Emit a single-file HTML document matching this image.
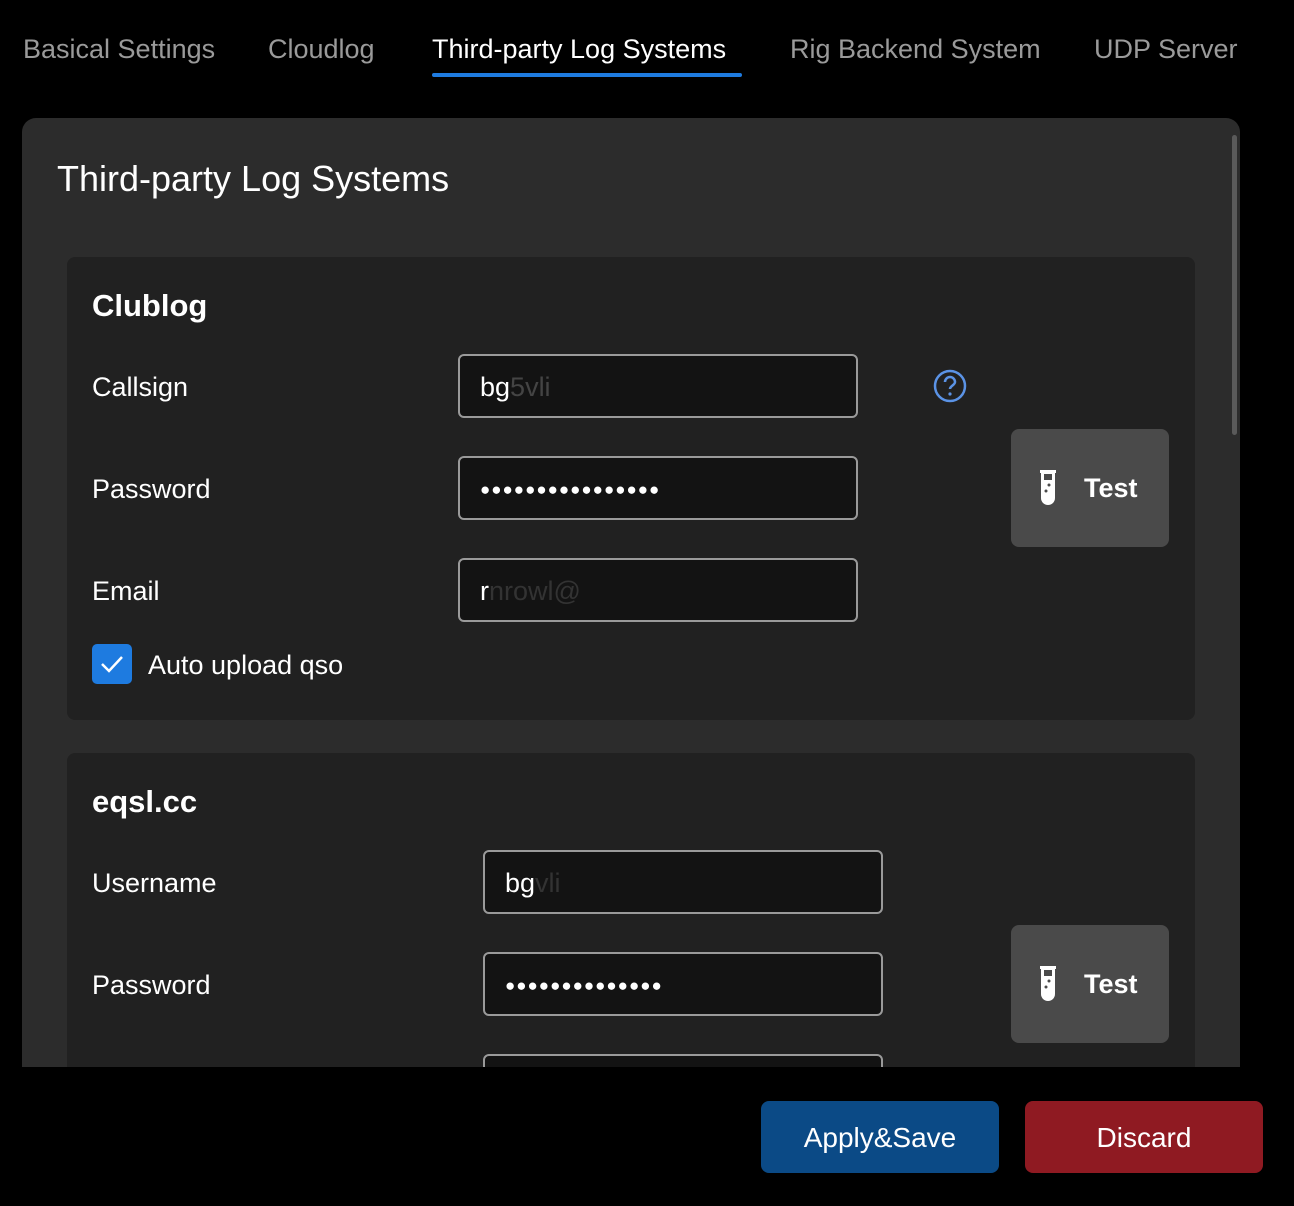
<!DOCTYPE html>
<html><head><style>
*{box-sizing:border-box;margin:0;padding:0}
body{width:1294px;height:1206px;background:#000;font-family:"Liberation Sans",sans-serif;color:#fff;position:relative;overflow:hidden}
.tab{position:absolute;top:34px;font-size:27px;color:#9a9a9a;white-space:nowrap}
.tab.act{color:#fff}
.ul{position:absolute;left:432px;top:73px;width:310px;height:4px;background:#1e7be0;border-radius:2px}
.panel{position:absolute;left:22px;top:118px;width:1218px;height:949px;background:#2c2c2c;border-radius:14px 14px 0 0;overflow:hidden}
.sb{position:absolute;left:1232px;top:135px;width:5px;height:300px;background:#5a5a5a;border-radius:3px}
h1{position:absolute;left:35px;top:40px;font-size:36px;font-weight:normal}
.sec{position:absolute;left:45px;width:1128px;background:#212121;border-radius:8px}
.sec h2{position:absolute;left:25px;font-size:31px;font-weight:bold}
.lbl{position:absolute;left:25px;font-size:27px}
.inp{position:absolute;width:400px;height:64px;background:#131313;border:2px solid #9a9a9a;border-radius:6px;font-size:27px;padding:16px 20px;color:#fff}
.dots{font-size:17px;letter-spacing:1px;padding-top:22px}
.test{position:absolute;left:944px;width:158px;height:118px;background:#4a4a4a;border-radius:8px}
.test span{position:absolute;left:73px;top:44px;font-size:27px;font-weight:bold}
.test svg{position:absolute;left:28px;top:40px}
.btn{position:absolute;top:1101px;width:238px;height:72px;border-radius:8px;font-size:28px;text-align:center;line-height:74px}
</style></head><body>
<div class="tab" style="left:23px">Basical Settings</div>
<div class="tab" style="left:268px">Cloudlog</div>
<div class="tab act" style="left:432px">Third-party Log Systems</div>
<div class="tab" style="left:790px">Rig Backend System</div>
<div class="tab" style="left:1094px">UDP Server</div>
<div class="ul"></div>
<div class="panel">
<h1>Third-party Log Systems</h1>
<div class="sec" style="top:139px;height:463px">
<h2 style="top:31px">Clublog</h2>
<div class="lbl" style="top:115px">Callsign</div>
<div class="inp" style="left:391px;top:97px">bg<span style="color:#444">5vli</span></div>
<svg style="position:absolute;left:866px;top:112px" width="34" height="34" viewBox="0 0 34 34"><circle cx="17" cy="17" r="15" fill="none" stroke="#5b93e6" stroke-width="2.5"/><path d="M12 13a5 5 0 0 1 10 0c0 3-5 4-5 7" fill="none" stroke="#5b93e6" stroke-width="2.5"/><circle cx="17" cy="25" r="1.6" fill="#5b93e6"/></svg>
<div class="lbl" style="top:217px">Password</div>
<div class="inp dots" style="left:391px;top:199px">●●●●●●●●●●●●●●●●</div>
<div class="test" style="top:172px"><svg width="18" height="36" viewBox="0 0 18 36"><rect x="1" y="1" width="16" height="3" fill="#fff"/><path d="M2 4h14v25a7 7 0 0 1-14 0z" fill="#fff"/><rect x="5" y="5" width="8" height="6" fill="#4a4a4a"/><circle cx="10" cy="16" r="1.5" fill="#4a4a4a"/><circle cx="7" cy="22" r="1.5" fill="#4a4a4a"/></svg><span>Test</span></div>
<div class="lbl" style="top:319px">Email</div>
<div class="inp" style="left:391px;top:301px">r<span style="color:#333">nrowl@</span></div>
<div style="position:absolute;left:25px;top:387px;width:40px;height:40px;background:#1e7be0;border-radius:5px"><svg width="40" height="40" viewBox="0 0 40 40"><path d="M10 20l7 7 13-14" fill="none" stroke="#fff" stroke-width="2.5"/></svg></div>
<div class="lbl" style="left:81px;top:393px">Auto upload qso</div>
</div>
<div class="sec" style="top:635px;height:400px">
<h2 style="top:31px">eqsl.cc</h2>
<div class="lbl" style="top:115px">Username</div>
<div class="inp" style="left:416px;top:97px">bg<span style="color:#333">vli</span></div>
<div class="lbl" style="top:217px">Password</div>
<div class="inp dots" style="left:416px;top:199px">●●●●●●●●●●●●●●</div>
<div class="test" style="top:172px"><svg width="18" height="36" viewBox="0 0 18 36"><rect x="1" y="1" width="16" height="3" fill="#fff"/><path d="M2 4h14v25a7 7 0 0 1-14 0z" fill="#fff"/><rect x="5" y="5" width="8" height="6" fill="#4a4a4a"/><circle cx="10" cy="16" r="1.5" fill="#4a4a4a"/><circle cx="7" cy="22" r="1.5" fill="#4a4a4a"/></svg><span>Test</span></div>
<div class="inp" style="left:416px;top:301px"></div>
</div>
</div>
<div class="sb"></div>
<div class="btn" style="left:761px;background:#0b4a86">Apply&amp;Save</div>
<div class="btn" style="left:1025px;background:#8f1a22">Discard</div>
</body></html>
